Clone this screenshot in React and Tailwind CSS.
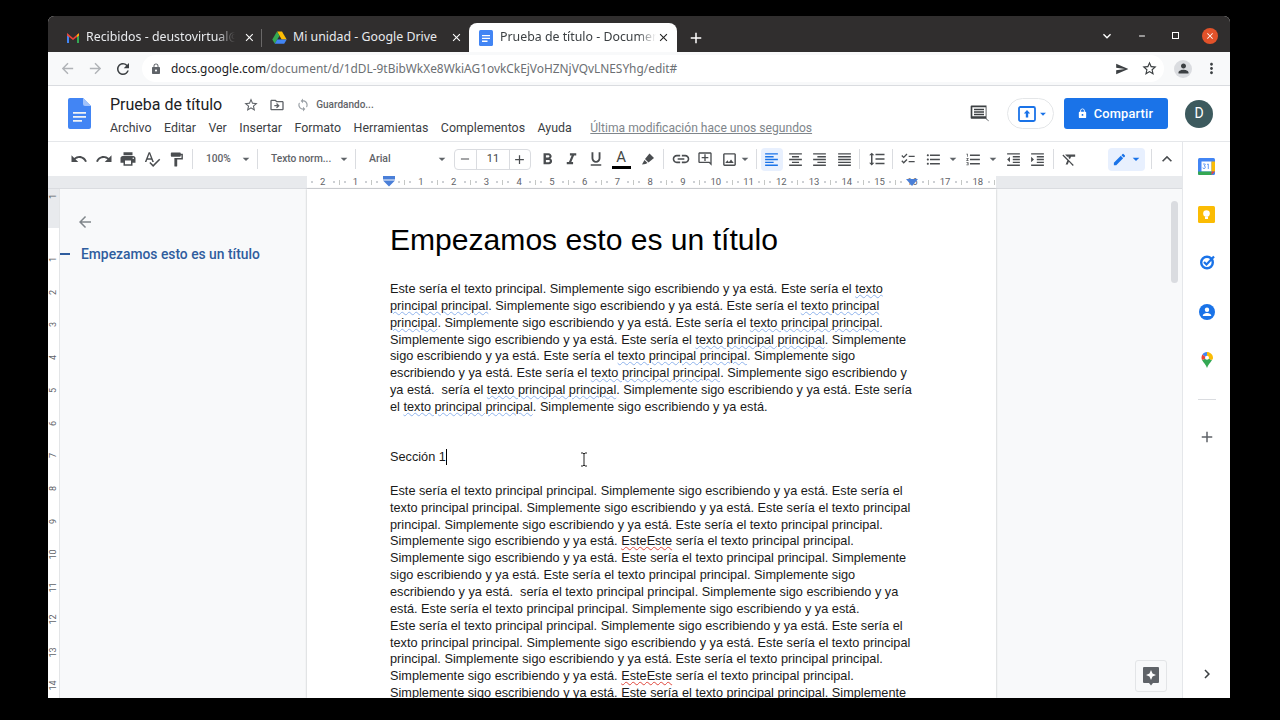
import React from "react";
import {
  MdUndo, MdRedo, MdPrint, MdSpellcheck, MdFormatPaint, MdFormatBold, MdFormatItalic, MdFormatUnderlined,
  MdLink, MdOutlineAddComment, MdOutlineImage, MdFormatAlignLeft, MdFormatAlignCenter, MdFormatAlignRight,
  MdFormatAlignJustify, MdFormatLineSpacing, MdChecklist, MdFormatListBulleted, MdFormatListNumbered,
  MdFormatIndentDecrease, MdFormatIndentIncrease, MdFormatClear, MdEdit, MdExpandLess, MdExpandMore, MdArrowBack,
  MdArrowForward, MdRefresh, MdLock, MdStarBorder, MdMoreVert, MdPerson, MdSend, MdClose, MdAdd, MdRemove,
  MdOutlineDriveFileMove, MdSync, MdArrowDropDown, MdChevronRight,
} from "react-icons/md";

const GmailIcon = () => (
  <svg width="14" height="12" viewBox="0 0 14 12" className="shrink-0">
    <path d="M1 1.5 L3 3 V11 H1 Z" fill="#4285f4" />
    <path d="M13 1.5 L11 3 V11 H13 Z" fill="#34a853" />
    <path d="M1 1 L7 6 L13 1 L13 3.5 L7 8 L1 3.5 Z" fill="#ea4335" />
    <path d="M11 3 L13 1.5 V3.5 L11 5 Z" fill="#fbbc04" />
  </svg>
);
const DriveIcon = () => (
  <svg width="15" height="13" viewBox="0 0 15 13" className="shrink-0">
    <path d="M5 0.5 H10 L14.7 8.5 H9.7 Z" fill="#fbbc04" />
    <path d="M5 0.5 L7.5 4.8 L2.8 12.7 L0.3 8.5 Z" fill="#34a853" />
    <path d="M2.8 12.7 L5.2 8.5 H14.7 L12.2 12.7 Z" fill="#4285f4" />
  </svg>
);
const DocsSmall = () => (
  <svg width="14" height="16" viewBox="0 0 14 16" className="shrink-0">
    <rect x="0" y="0" width="14" height="16" rx="1.5" fill="#4285f4" />
    <path d="M3 5h8v1.3H3zM3 7.8h8v1.3H3zM3 10.6h5.5v1.3H3z" fill="#fff" />
  </svg>
);
const DocsLogo = () => (
  <svg width="23" height="31" viewBox="0 0 23 31" className="shrink-0">
    <path d="M2 0 H15 L23 8 V29 a2 2 0 0 1 -2 2 H2 a2 2 0 0 1 -2 -2 V2 a2 2 0 0 1 2 -2 Z" fill="#4285f4" />
    <path d="M15 0 L23 8 H17 a2 2 0 0 1 -2 -2 Z" fill="#a1c2fa" />
    <path d="M5 14h13v1.8H5zM5 18h13v1.8H5zM5 22h9v1.8H5z" fill="#f1f3f4" />
  </svg>
);
const CommentIcon = () => (
  <svg width="20" height="20" viewBox="0 0 24 24" fill="#3c4043" className="-mt-[2px]">
    <path d="M3 3h18v15.5l3 3-0.5.5-3.5-3H3a1 1 0 0 1-1-1V4a1 1 0 0 1 1-1zm1 2v11h16V5z" />
    <path d="M6 7h12v1.8H6zM6 10h12v1.8H6zM6 13h12v1.8H6z" />
  </svg>
);
const PresentIcon = () => (
  <svg width="18" height="16" viewBox="0 0 18 16">
    <rect x="1" y="1" width="16" height="14" rx="1.5" fill="none" stroke="#1a73e8" strokeWidth="1.8" />
    <path d="M9 4 L12.2 7.6 H10.2 V11.5 H7.8 V7.6 H5.8 Z" fill="#1a73e8" />
  </svg>
);
const CalendarIcon = () => (
  <svg width="17" height="17" viewBox="0 0 17 17">
    <rect width="17" height="17" rx="1.5" fill="#4285f4" />
    <rect x="3.5" y="3.5" width="10" height="10" fill="#fff" />
    <path d="M13.5 3.5 H17 V13.5 H13.5 Z" fill="#fbbc04" />
    <path d="M0 13.5 H13.5 V17 H1.5 a1.5 1.5 0 0 1 -1.5 -1.5 Z" fill="#34a853" />
    <path d="M13.5 13.5 H17 L13.5 17 Z" fill="#ea4335" />
    <path d="M5 6h2.2v.8l-1 1.2c.8 0 1.2.5 1.2 1.2 0 .9-.7 1.4-1.4 1.4S4.800 10.100 4.800 9.600M9 6.500l1.300-.5V11" fill="none" stroke="#4285f4" strokeWidth=".8" />
  </svg>
);
const KeepIcon = () => (
  <svg width="17" height="17" viewBox="0 0 17 17">
    <rect width="17" height="17" rx="1.5" fill="#fbbc04" />
    <circle cx="8.500" cy="7.500" r="3.300" fill="#fff" />
    <rect x="7" y="10.500" width="3" height="2.500" fill="#fff" />
  </svg>
);
const TasksIcon = () => (
  <svg width="16" height="16" viewBox="0 0 16 16">
    <circle cx="8" cy="8.500" r="5.800" fill="none" stroke="#1a73e8" strokeWidth="2.400" />
    <path d="M5 8 L7.500 10.500 L15 2.500" fill="none" stroke="#1a73e8" strokeWidth="2.200" />
  </svg>
);
const ContactsIcon = () => (
  <svg width="16" height="16" viewBox="0 0 16 16">
    <circle cx="8" cy="8" r="8" fill="#1a73e8" />
    <circle cx="8" cy="5.800" r="2.200" fill="#fff" />
    <path d="M3.800 11.500c0-1.800 2.800-2.600 4.200-2.600s4.200.8 4.200 2.600v.5H3.800z" fill="#fff" />
  </svg>
);
const MapsIcon = () => (
  <svg width="12" height="16" viewBox="0 0 12 16">
    <path d="M6 16 C5 12.500 2.500 11 1 8 L6 6 Z" fill="#34a853" />
    <path d="M6 16 C7 12.500 9.500 11 11 8 L6 6 Z" fill="#34a853" />
    <path d="M6 0 C4 0 2.300 1 1.400 2.500 L6 6 Z" fill="#4285f4" />
    <path d="M1.400 2.500 C0.300 4.500 0.300 6.300 1 8 L6 6 Z" fill="#ea4335" />
    <path d="M6 0 C9 0 12 2.500 12 6 C12 6.700 11.500 7.500 11 8 L6 6 Z" fill="#fbbc04" />
    <circle cx="6" cy="5.800" r="2" fill="#fff" />
  </svg>
);
const ExploreIcon = () => (
  <svg width="16" height="19" viewBox="0 0 16 19">
    <path d="M1 0 H15 a1 1 0 0 1 1 1 V15 a1 1 0 0 1 -1 1 H10 L8 18.500 L6 16 H1 a1 1 0 0 1 -1 -1 V1 a1 1 0 0 1 1 -1 Z" fill="#5f6368" />
    <path d="M8 3 L9.500 6.500 L13 8 L9.500 9.500 L8 13 L6.500 9.500 L3 8 L6.500 6.500 Z" fill="#fff" />
  </svg>
);
const IBeam = () => (
  <svg width="8" height="15" viewBox="0 0 8 15">
    <path d="M1 1h2l1 1 1-1h2M4 2v11M1 14h2l1-1 1 1h2" fill="none" stroke="#222" strokeWidth="1" />
  </svg>
);
const Highlighter = () => (
  <svg width="16" height="16" viewBox="0 0 16 16" fill="#4a4d50">
    <path d="M9.500 2.500 L14 7 L8.500 11.500 L5 8 Z" />
    <path d="M4.500 9 L7.500 12 L5.500 13 L2 13.500 Z" />
  </svg>
);

const Sep = ({ ml = "ml-1", mr = "mr-1" }) => <div className={`w-px h-5 bg-[#dadce0] shrink-0 ${ml} ${mr}`} />;
const Btn = ({ children, w = "w-[24.4px]" }) => (
  <div className={`${w} h-6 flex items-center justify-center shrink-0 text-[#4a4d50]`}>{children}</div>
);
const Caret = ({ className = "" }) => <MdArrowDropDown size={16} className={`shrink-0 text-[#5f6368] ${className}`} />;

function Toolbar() {
  return (
    <div className="h-[34px] bg-white flex items-center pl-[19px] shrink-0 text-[#4a4d50]">
      <Btn><MdUndo size={18} /></Btn>
      <Btn><MdRedo size={18} /></Btn>
      <Btn><MdPrint size={18} /></Btn>
      <Btn><MdSpellcheck size={18} /></Btn>
      <Btn><MdFormatPaint size={17} /></Btn>
      <Sep ml="ml-[3px]" mr="mr-[13px]" />
      <span className="w-[32px] text-[10.2px] font-medium text-[#5f6368] shrink-0">100%</span>
      <Caret />
      <Sep ml="ml-[3px]" mr="mr-[13px]" />
      <span className="w-[65px] text-[10.2px] font-medium text-[#5f6368] shrink-0 whitespace-nowrap">Texto norm...</span>
      <Caret />
      <Sep ml="ml-[3px]" mr="mr-[13px]" />
      <span className="w-[65px] text-[10.5px] font-medium text-[#5f6368] shrink-0">Arial</span>
      <Caret />
      <div className="ml-[4px] mr-[4px] w-[77px] h-[21px] border border-[#dadce0] rounded-sm flex items-center shrink-0">
        <div className="w-[21px] flex justify-center"><MdRemove size={14} /></div>
        <div className="w-[34px] h-full border-x border-[#dadce0] flex items-center justify-center text-[11px] text-[#444746]">11</div>
        <div className="w-[20px] flex justify-center"><MdAdd size={15} /></div>
      </div>
      <Btn><MdFormatBold size={19} /></Btn>
      <Btn><MdFormatItalic size={19} /></Btn>
      <Btn><MdFormatUnderlined size={18} /></Btn>
      <div className="w-[26px] h-6 flex flex-col items-center justify-center shrink-0">
        <span className="text-[15px] leading-[16px] text-[#444746]">A</span>
        <div className="w-[19px] h-[3px] bg-black mt-[1px]" />
      </div>
      <Btn w="w-[27px]"><Highlighter /></Btn>
      <Sep ml="ml-[2px]" mr="mr-[5px]" />
      <Btn><MdLink size={20} /></Btn>
      <Btn w="w-[23px]"><MdOutlineAddComment size={16} /></Btn>
      <div className="w-[25px] flex justify-center shrink-0"><MdOutlineImage size={17} /></div>
      <Caret className="-ml-[5px]" />
      <Sep ml="ml-[3px]" mr="mr-[4px]" />
      <div className="w-[22px] h-[23px] bg-[#e8f0fe] rounded-sm flex items-center justify-center text-[#1a73e8] shrink-0"><MdFormatAlignLeft size={17} /></div>
      <Btn w="w-[25px]"><MdFormatAlignCenter size={17} /></Btn>
      <Btn><MdFormatAlignRight size={17} /></Btn>
      <Btn><MdFormatAlignJustify size={17} /></Btn>
      <Sep ml="ml-[3px]" mr="mr-[5px]" />
      <Btn><MdFormatLineSpacing size={18} /></Btn>
      <Sep ml="ml-[2px]" mr="mr-[3px]" />
      <Btn w="w-[25px]"><MdChecklist size={16} /></Btn>
      <Btn w="w-[25px]"><MdFormatListBulleted size={17} /></Btn>
      <Caret className="-ml-[1px]" />
      <Btn w="w-[25px]"><MdFormatListNumbered size={17} /></Btn>
      <Caret className="-ml-[1px]" />
      <Btn w="w-[25px]"><MdFormatIndentDecrease size={17} /></Btn>
      <Btn w="w-[24px]"><MdFormatIndentIncrease size={17} /></Btn>
      <Sep ml="ml-[3px]" mr="mr-[3px]" />
      <Btn w="w-[26px]"><MdFormatClear size={17} /></Btn>
      <div className="ml-[25px] w-[37px] h-[23px] bg-[#e8f0fe] rounded-sm flex items-center pl-[4px] text-[#1a73e8] shrink-0">
        <MdEdit size={15} />
        <MdArrowDropDown size={16} className="ml-[1px]" />
      </div>
      <Sep ml="ml-[6px]" mr="mr-[3px]" />
      <Btn><MdExpandLess size={20} /></Btn>
    </div>
  );
}

function HRuler() {
  const labels = [2, 1, null, 1, 2, 3, 4, 5, 6, 7, 8, 9, 10, 11, 12, 13, 14, 15, 16, 17, 18, null];
  return (
    <div className="h-[13px] bg-[#e8eaed] flex shrink-0 border-b border-[#dadce0] relative">
      <div className="w-[259px] shrink-0" />
      <div className="w-[689px] bg-white flex items-center overflow-hidden shrink-0">
        {labels.map((n, i) => (
          <div key={i} className={`w-[32.75px] h-full shrink-0 flex items-center justify-around text-[9.5px] leading-none text-[#5f6368] ${i === 0 ? "-ml-[10px]" : ""}`}>
            <span className="w-[2px] h-[2px] mx-[2px] rounded-full bg-[#bdc1c6]" />
            <div className="w-px h-[5px] bg-[#c4c7c5]" />
            <span className="w-[2px] h-[2px] mx-[2px] rounded-full bg-[#bdc1c6]" />
            <span className="w-[12px] text-center">{n === null ? "" : n}</span>
          </div>
        ))}
      </div>
      <svg width="12" height="11" viewBox="0 0 12 11" className="absolute left-[335px] top-0">
        <path d="M0 0 H12 V3.500 H0 Z M0 4.500 H12 L6 10.500 Z" fill="#4a7fd8" />
      </svg>
      <svg width="12" height="8" viewBox="0 0 12 8" className="absolute left-[858px] top-[3px]">
        <path d="M0 0 H12 L6 7 Z" fill="#4a7fd8" />
      </svg>
    </div>
  );
}

function VRuler() {
  const nums = [1, 2, 3, 4, 5, 6, 7, 8, 9, 10, 11, 12, 13, 14];
  return (
    <div className="w-3 bg-white border-r border-[#e3e5e7] shrink-0 flex flex-col overflow-hidden text-[9px] leading-none text-[#5f6368]">
      <div className="h-[39px] bg-[#e8eaed] shrink-0 flex justify-center pt-[3px]">
        <span className="-rotate-90 h-[9px]">1</span>
      </div>
      <div className="h-[15px] shrink-0" />
      {nums.map((n) => (
        <div key={n} className="h-[32.77px] shrink-0 flex flex-col items-center justify-center">
          <span className="-rotate-90 block">{n}</span>
        </div>
      ))}
    </div>
  );
}

const Sp = ({ children }) => (
  <span className="underline decoration-wavy decoration-[#8fb3ec] decoration-1 underline-offset-[1px]">{children}</span>
);
const Red = ({ children }) => (
  <span className="underline decoration-wavy decoration-[#e0453a] decoration-1 underline-offset-[1px]">{children}</span>
);

function Page() {
  return (
    <div className="w-[689px] bg-white shrink-0 shadow-[0_0_2px_rgba(60,64,67,0.35)] pl-[83px] pt-[31px] overflow-hidden relative font-['Liberation_Sans',Arial,sans-serif] text-[12.73px] leading-[16.86px] text-[#1a1a1a] whitespace-pre">
      <h1 className="text-[30.08px] leading-[40px] text-black">Empezamos esto es un título</h1>
      <div className="mt-[21px]">
        <div>Este sería el texto principal. Simplemente sigo escribiendo y ya está. Este sería el <Sp>texto</Sp></div>
        <div><Sp>principal principal</Sp>. Simplemente sigo escribiendo y ya está. Este sería el <Sp>texto principal</Sp></div>
        <div><Sp>principal</Sp>. Simplemente sigo escribiendo y ya está. Este sería el <Sp>texto principal principal</Sp>.</div>
        <div>Simplemente sigo escribiendo y ya está. Este sería el <Sp>texto principal principal</Sp>. Simplemente</div>
        <div>sigo escribiendo y ya está. Este sería el <Sp>texto principal principal</Sp>. Simplemente sigo</div>
        <div>escribiendo y ya está. Este sería el <Sp>texto principal principal</Sp>. Simplemente sigo escribiendo y</div>
        <div>ya está.  sería el <Sp>texto principal principal</Sp>. Simplemente sigo escribiendo y ya está. Este sería</div>
        <div>el <Sp>texto principal principal</Sp>. Simplemente sigo escribiendo y ya está.</div>
      </div>
      <div className="mt-[33px] flex items-center h-[17px]">
        <span>Sección 1</span>
        <span className="w-px h-[16px] bg-black" />
      </div>
      <div className="absolute left-[273px] top-[263px]"><IBeam /></div>
      <div className="mt-[17px]">
        <div>Este sería el texto principal principal. Simplemente sigo escribiendo y ya está. Este sería el</div>
        <div>texto principal principal. Simplemente sigo escribiendo y ya está. Este sería el texto principal</div>
        <div>principal. Simplemente sigo escribiendo y ya está. Este sería el texto principal principal.</div>
        <div>Simplemente sigo escribiendo y ya está. <Red>EsteEste</Red> sería el texto principal principal.</div>
        <div>Simplemente sigo escribiendo y ya está. Este sería el texto principal principal. Simplemente</div>
        <div>sigo escribiendo y ya está. Este sería el texto principal principal. Simplemente sigo</div>
        <div>escribiendo y ya está.  sería el texto principal principal. Simplemente sigo escribiendo y ya</div>
        <div>está. Este sería el texto principal principal. Simplemente sigo escribiendo y ya está.</div>
        <div>Este sería el texto principal principal. Simplemente sigo escribiendo y ya está. Este sería el</div>
        <div>texto principal principal. Simplemente sigo escribiendo y ya está. Este sería el texto principal</div>
        <div>principal. Simplemente sigo escribiendo y ya está. Este sería el texto principal principal.</div>
        <div>Simplemente sigo escribiendo y ya está. <Red>EsteEste</Red> sería el texto principal principal.</div>
        <div>Simplemente sigo escribiendo y ya está. Este sería el texto principal principal. Simplemente</div>
      </div>
    </div>
  );
}

export default function App() {
  return (
    <div className="w-[1280px] h-[720px] bg-black pt-4 pl-12 overflow-hidden font-['Roboto',sans-serif]">
      <div className="w-[1182px] h-[682px] flex flex-col overflow-hidden rounded-t-md bg-white">
        {/* Tab strip */}
        <div className="h-9 bg-[#302e2e] flex items-end shrink-0 font-['Noto_Sans',sans-serif] text-[12.35px] text-[#e8eaed]">
          <div className="w-[214px] h-[29px] flex items-center pl-[18px] shrink-0">
            <GmailIcon />
            <span className="ml-[6px] w-[152px] overflow-hidden whitespace-nowrap [mask-image:linear-gradient(90deg,#000_88%,transparent)]">Recibidos - deustovirtual@</span>
            <MdClose size={13} className="ml-[8px] text-white" />
            <div className="ml-[5px] w-px h-[18px] bg-[#6a6868]" />
          </div>
          <div className="w-[207px] h-[29px] flex items-center pl-[10px] shrink-0">
            <DriveIcon />
            <span className="ml-[6px] w-[150px] whitespace-nowrap overflow-hidden">Mi unidad - Google Drive</span>
            <MdClose size={13} className="ml-[7px] text-white" />
          </div>
          <div className="w-[208px] h-[29px] bg-white rounded-t-lg flex items-center pl-[10px] text-[#3c4043] shrink-0">
            <DocsSmall />
            <span className="ml-[7px] w-[156px] overflow-hidden whitespace-nowrap [mask-image:linear-gradient(90deg,#000_88%,transparent)]">Prueba de título - Documentos</span>
            <MdClose size={13} className="ml-[1px] text-[#222]" />
          </div>
          <div className="h-[29px] flex items-center ml-[10px] text-white"><MdAdd size={18} /></div>
          <div className="flex-1" />
          <div className="h-[36px] flex items-center pt-[3px] pr-[12px] text-white">
            <MdExpandMore size={16} />
            <MdRemove size={10} className="ml-[22px]" />
            <div className="ml-[25px] w-[7px] h-[7px] border border-white" />
            <div className="ml-[23px] w-[16px] h-[16px] rounded-full bg-[#e2522a] flex items-center justify-center"><MdClose size={10} /></div>
          </div>
        </div>
        {/* Address bar */}
        <div className="h-[34px] bg-[#f8f9fa] border-b border-[#dadce0] flex items-center shrink-0 text-[#5f6368]">
          <MdArrowBack size={17} className="ml-[11px] text-[#b0b3b7]" />
          <MdArrowForward size={17} className="ml-[11px] text-[#b0b3b7]" />
          <MdRefresh size={18} className="ml-[10px] text-[#3c4043]" />
          <div className="ml-[10px] w-[1022px] h-[27px] bg-white rounded-full flex items-center pl-[8px] pr-[6px]">
            <MdLock size={12} className="text-[#5f6368]" />
            <span className="ml-[9px] text-[11.9px] font-['Noto_Sans',sans-serif] whitespace-nowrap text-[#6b6f73]"><span className="text-[#202124]">docs.google.com</span>/document/d/1dDL-9tBibWkXe8WkiAG1ovkCkEjVoHZNjVQvLNESYhg/edit#</span>
            <div className="flex-1" />
            <MdSend size={14} className="text-[#3c4043]" />
            <MdStarBorder size={17} className="ml-[12px] text-[#3c4043]" />
          </div>
          <div className="ml-[10px] w-[18px] h-[18px] rounded-full bg-[#dadce0] flex items-center justify-center text-[#3c4043]"><MdPerson size={15} /></div>
          <MdMoreVert size={17} className="ml-[11px] text-[#3c4043]" />
        </div>
        {/* Docs header */}
        <div className="h-[56px] bg-white border-b border-[#e5e7ea] flex shrink-0 pl-5 text-[#3c4043]">
          <div className="pt-[12px]"><DocsLogo /></div>
          <div className="ml-[19px] pt-[8px] flex flex-col">
            <div className="flex items-center h-[20px] pt-[1px]">
              <span className="text-[16px] leading-5 text-[#202124]">Prueba de título</span>
              <MdStarBorder size={16} className="ml-[21px] text-[#5f6368]" />
              <MdOutlineDriveFileMove size={16} className="ml-[10px] text-[#5f6368]" />
              <MdSync size={14} className="ml-[11px] text-[#9aa0a6]" />
              <span className="ml-[6px] text-[10px] font-medium text-[#5f6368]">Guardando...</span>
            </div>
            <div className="mt-[4px] flex items-center gap-[12.5px] text-[12.4px] h-5 text-[#3c4043]">
              <span>Archivo</span><span>Editar</span><span>Ver</span><span>Insertar</span><span>Formato</span><span>Herramientas</span><span>Complementos</span><span>Ayuda</span>
              <span className="ml-[6px] underline text-[12.1px] text-[#80868b]">Última modificación hace unos segundos</span>
            </div>
          </div>
          <div className="flex-1" />
          <div className="flex items-center pr-[17px]">
            <CommentIcon />
            <div className="ml-[18px] w-[47px] h-[31px] rounded-full border border-[#e4e6e8] flex items-center pl-[10px]">
              <PresentIcon />
              <MdArrowDropDown size={14} className="text-[#1a73e8]" />
            </div>
            <div className="ml-[10px] w-[104px] h-[31px] pr-[2px] rounded-[3px] bg-[#1a73e8] flex items-center justify-center text-white text-[12.8px] font-medium tracking-[0.2px]">
              <MdLock size={11} className="mr-[6px]" />Compartir
            </div>
            <div className="ml-[17px] w-[28px] h-[28px] rounded-full bg-[#3d5a5e] flex items-center justify-center text-white text-[14px]">D</div>
          </div>
        </div>
        {/* Body */}
        <div className="flex-1 flex min-h-0">
          <div className="flex-1 flex flex-col min-w-0 relative">
            <Toolbar />
            <HRuler />
            <div className="flex-1 flex min-h-0 bg-[#f8f9fa]">
              <VRuler />
              <div className="w-[247px] shrink-0 flex flex-col">
                <MdArrowBack size={18} className="ml-[16px] mt-[24px] text-[#80868b]" />
                <div className="mt-[13px] flex items-center h-5">
                  <div className="w-[10px] h-[2px] bg-[#2f5d9e]" />
                  <span className="ml-[11px] text-[13.83px] font-medium text-[#2f5d9e] whitespace-nowrap">Empezamos esto es un título</span>
                </div>
              </div>
              <Page />
              <div className="flex-1 flex justify-end pr-[4px] pt-[12px] relative">
                <div className="w-[7px] h-[82px] rounded-full bg-[#dadce0]" />
                <div className="absolute right-[15px] bottom-[6px] w-[32px] h-[32px] rounded-[3px] border border-[#e3e5e7] bg-[#f8f9fa] flex items-center justify-center">
                  <ExploreIcon />
                </div>
              </div>
            </div>
          </div>
          {/* Right panel */}
          <div className="w-[48px] bg-white border-l border-[#e5e7ea] flex flex-col items-center shrink-0 pt-[16px]">
            <CalendarIcon />
            <div className="mt-[31px]"><KeepIcon /></div>
            <div className="mt-[31px]"><TasksIcon /></div>
            <div className="mt-[34px]"><ContactsIcon /></div>
            <div className="mt-[32px]"><MapsIcon /></div>
            <div className="mt-[31px] w-[18px] h-px bg-[#dadce0]" />
            <MdAdd size={18} className="mt-[28px] text-[#5f6368]" />
            <div className="flex-1" />
            <MdChevronRight size={18} className="mb-[15px] text-[#3c4043]" />
          </div>
        </div>
      </div>
    </div>
  );
}
